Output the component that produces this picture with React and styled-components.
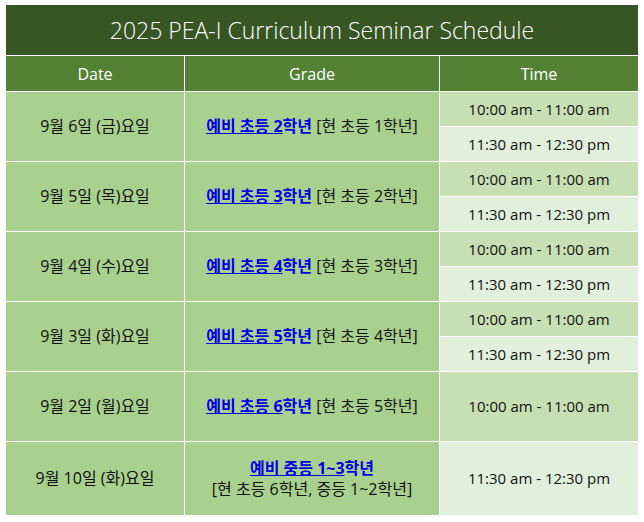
import React from 'react';
import styled, { createGlobalStyle } from 'styled-components';

var GlobalStyle = createGlobalStyle`
  body {
    margin: 0;
    background: #ffffff;
    font-family: "Open Sans", "Noto Sans CJK KR", sans-serif;
  }
`;

var Page = styled.div`
  padding: 5px;
`;

var Table = styled.table`
  width: 633px;
  border-collapse: collapse;
  table-layout: fixed;
  font-size: 15px;
  color: #111111;
`;

var TitleCell = styled.th`
  height: 50px;
  padding: 0;
  background-color: #375623;
  color: #ffffff;
  font-size: 23px;
  font-weight: 300;
  text-align: center;
  border: 1px solid #ffffff;
  border-top: none;
`;

var HeadCell = styled.th`
  height: 35px;
  padding: 0;
  background-color: #548235;
  color: #ffffff;
  font-size: 16px;
  font-weight: 400;
  text-align: center;
  border: 1px solid #ffffff;
`;

var Cell = styled.td`
  padding: 0;
  text-align: center;
  vertical-align: middle;
  background-color: ${props => props.bg || '#a9d08e'};
  border: 1px solid #ffffff;
  height: ${props => props.h || 34}px;
  font-size: ${props => (props.ko ? 16 : 15)}px;
  line-height: 21px;
`;

var GradeLink = styled.span`
  color: #0000e6;
  font-weight: 700;
`;

var Under = styled.span`
  text-decoration: underline;
`;

var rows = [
  { date: '9월 6일 (금)요일', grade: '2', now: '1', times: ['10:00 am - 11:00 am', '11:30 am - 12:30 pm'] },
  { date: '9월 5일 (목)요일', grade: '3', now: '2', times: ['10:00 am - 11:00 am', '11:30 am - 12:30 pm'] },
  { date: '9월 4일 (수)요일', grade: '4', now: '3', times: ['10:00 am - 11:00 am', '11:30 am - 12:30 pm'] },
  { date: '9월 3일 (화)요일', grade: '5', now: '4', times: ['10:00 am - 11:00 am', '11:30 am - 12:30 pm'] },
];

export default function App() {
  return (
    <Page>
      <GlobalStyle />
      <Table>
        <colgroup>
          <col style={{ width: 179 }} />
          <col style={{ width: 255 }} />
          <col style={{ width: 199 }} />
        </colgroup>
        <thead>
          <tr>
            <TitleCell colSpan={3}>2025 PEA-I Curriculum Seminar Schedule</TitleCell>
          </tr>
          <tr>
            <HeadCell>Date</HeadCell>
            <HeadCell>Grade</HeadCell>
            <HeadCell>Time</HeadCell>
          </tr>
        </thead>
        <tbody>
          {rows.map(r => (
            <React.Fragment key={r.date}>
              <tr>
                <Cell ko rowSpan={2}>{r.date}</Cell>
                <Cell ko rowSpan={2}>
                  <GradeLink><Under>예비 초등 {r.grade}</Under>학년</GradeLink> [현 초등 {r.now}학년]
                </Cell>
                <Cell bg="#c6e0b4">{r.times[0]}</Cell>
              </tr>
              <tr>
                <Cell bg="#e2efda">{r.times[1]}</Cell>
              </tr>
            </React.Fragment>
          ))}
          <tr>
            <Cell ko h={69}>9월 2일 (월)요일</Cell>
            <Cell ko h={69}>
              <GradeLink><Under>예비 초등 6</Under>학년</GradeLink> [현 초등 5학년]
            </Cell>
            <Cell h={69} bg="#c6e0b4">10:00 am - 11:00 am</Cell>
          </tr>
          <tr>
            <Cell ko h={73}>9월 10일 (화)요일</Cell>
            <Cell ko h={73}>
              <GradeLink><Under>예비 중등 1~3</Under>학년</GradeLink>
              <br />
              [현 초등 6학년, 중등 1~2학년]
            </Cell>
            <Cell h={73} bg="#e2efda">11:30 am - 12:30 pm</Cell>
          </tr>
        </tbody>
      </Table>
    </Page>
  );
}
